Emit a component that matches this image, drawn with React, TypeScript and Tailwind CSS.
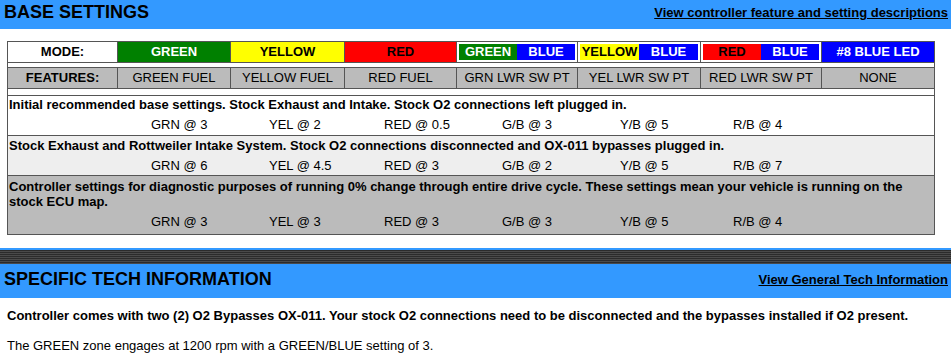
import React from "react";

const values = [
  ["GRN @ 3", "YEL @ 2", "RED @ 0.5", "G/B @ 3", "Y/B @ 5", "R/B @ 4"],
  ["GRN @ 6", "YEL @ 4.5", "RED @ 3", "G/B @ 2", "Y/B @ 5", "R/B @ 7"],
  ["GRN @ 3", "YEL @ 3", "RED @ 3", "G/B @ 3", "Y/B @ 5", "R/B @ 4"],
];

const colW = ["w-[118px]", "w-[115px]", "w-[118px]", "w-[118px]", "w-[113px]", ""];

function Values({ v }: { v: string[] }) {
  return (
    <div className="flex pl-[142px] leading-[15px] font-normal">
      {v.map((t, i) => (
        <span key={i} className={colW[i]}>
          {t}
        </span>
      ))}
    </div>
  );
}

function Split({ a, aBg, aText, b }: { a: string; aBg: string; aText: string; b: string }) {
  return (
    <div className="bg-white p-[2px] flex h-[20px]">
      <div className={`flex-1 flex items-center justify-center ${aBg} ${aText}`}>{a}</div>
      <div className="flex-1 flex items-center justify-center bg-[#0000ff] text-white">{b}</div>
    </div>
  );
}

export default function App() {
  return (
    <div className="w-[951px] h-[358px] bg-white overflow-hidden font-['Liberation_Sans',Arial,sans-serif] text-[13px] text-black">
      {/* Header 1 */}
      <div className="bg-[#3399ff] h-[29px] pb-[5px] flex items-center justify-between pl-[4px] pr-[3px]">
        <span className="text-[18px] font-bold leading-[21px]">BASE SETTINGS</span>
        <span className="font-bold underline leading-[15px]">View controller feature and setting descriptions</span>
      </div>

      {/* Table */}
      <div className="mt-[12px] ml-[7px] w-[928px] border border-[#555] bg-[#555] flex flex-col gap-y-px">
        <div className="grid grid-cols-[109px_112px_113px_111px_120px_122px_120px_112px] gap-x-px h-[20px] font-bold">
          <div className="bg-white flex items-center justify-center">MODE:</div>
          <div className="bg-[#008000] text-white flex items-center justify-center">GREEN</div>
          <div className="bg-[#ffff00] flex items-center justify-center">YELLOW</div>
          <div className="bg-[#ff0000] flex items-center justify-center">RED</div>
          <Split a="GREEN" aBg="bg-[#008000]" aText="text-white" b="BLUE" />
          <Split a="YELLOW" aBg="bg-[#ffff00]" aText="text-black" b="BLUE" />
          <Split a="RED" aBg="bg-[#ff0000]" aText="text-black" b="BLUE" />
          <div className="bg-[#0000ff] text-white flex items-center justify-center">#8 BLUE LED</div>
        </div>
        <div className="bg-white h-[4px]" />
        <div className="grid grid-cols-[109px_112px_113px_111px_120px_122px_120px_112px] gap-x-px h-[20px]">
          <div className="bg-[#bbbbbb] flex items-center justify-center font-bold">FEATURES:</div>
          <div className="bg-[#bbbbbb] flex items-center justify-center">GREEN FUEL</div>
          <div className="bg-[#bbbbbb] flex items-center justify-center">YELLOW FUEL</div>
          <div className="bg-[#bbbbbb] flex items-center justify-center">RED FUEL</div>
          <div className="bg-[#bbbbbb] flex items-center justify-center">GRN LWR SW PT</div>
          <div className="bg-[#bbbbbb] flex items-center justify-center">YEL LWR SW PT</div>
          <div className="bg-[#bbbbbb] flex items-center justify-center">RED LWR SW PT</div>
          <div className="bg-[#bbbbbb] flex items-center justify-center">NONE</div>
        </div>
        <div className="bg-white h-[6px]" />
        <div className="bg-white pl-[1px] pt-[1px] pb-[3px]">
          <div className="font-bold leading-[15px]">
            Initial recommended base settings. Stock Exhaust and Intake. Stock O2 connections left plugged in.
          </div>
          <div className="mt-[5px]">
            <Values v={values[0]} />
          </div>
        </div>
        <div className="bg-[#eeeeee] pl-[1px] pt-[2px] pb-[2px]">
          <div className="font-bold leading-[15px]">
            Stock Exhaust and Rottweiler Intake System. Stock O2 connections disconnected and OX-011 bypasses plugged in.
          </div>
          <div className="mt-[5px]">
            <Values v={values[1]} />
          </div>
        </div>
        <div className="bg-[#bbbbbb] pl-[1px] pt-[3px] pb-[5px]">
          <div className="font-bold leading-[15px]">
            Controller settings for diagnostic purposes of running 0% change through entire drive cycle. These settings mean your vehicle is running on the
            <br />
            stock ECU map.
          </div>
          <div className="mt-[5px]">
            <Values v={values[2]} />
          </div>
        </div>
      </div>

      {/* Header 2 */}
      <div className="mt-[13px] bg-[#3399ff] pt-[2px]">
        <div className="h-[14px] bg-[repeating-linear-gradient(to_bottom,#2b2b2b_0px,#2b2b2b_1px,#4a4a4a_1px,#4a4a4a_2px)]" />
        <div className="h-[34px] pb-[3px] flex items-center justify-between pl-[4px] pr-[3px]">
          <span className="text-[18px] font-bold leading-[21px]">SPECIFIC TECH INFORMATION</span>
          <span className="font-bold underline leading-[15px]">View General Tech Information</span>
        </div>
      </div>

      <p className="mt-[10px] ml-[7px] font-bold leading-[16px]">
        Controller comes with two (2) O2 Bypasses OX-011. Your stock O2 connections need to be disconnected and the bypasses installed if O2 present.
      </p>
      <p className="mt-[14px] ml-[7px] leading-[16px]">
        The GREEN zone engages at 1200 rpm with a GREEN/BLUE setting of 3.
      </p>
    </div>
  );
}
